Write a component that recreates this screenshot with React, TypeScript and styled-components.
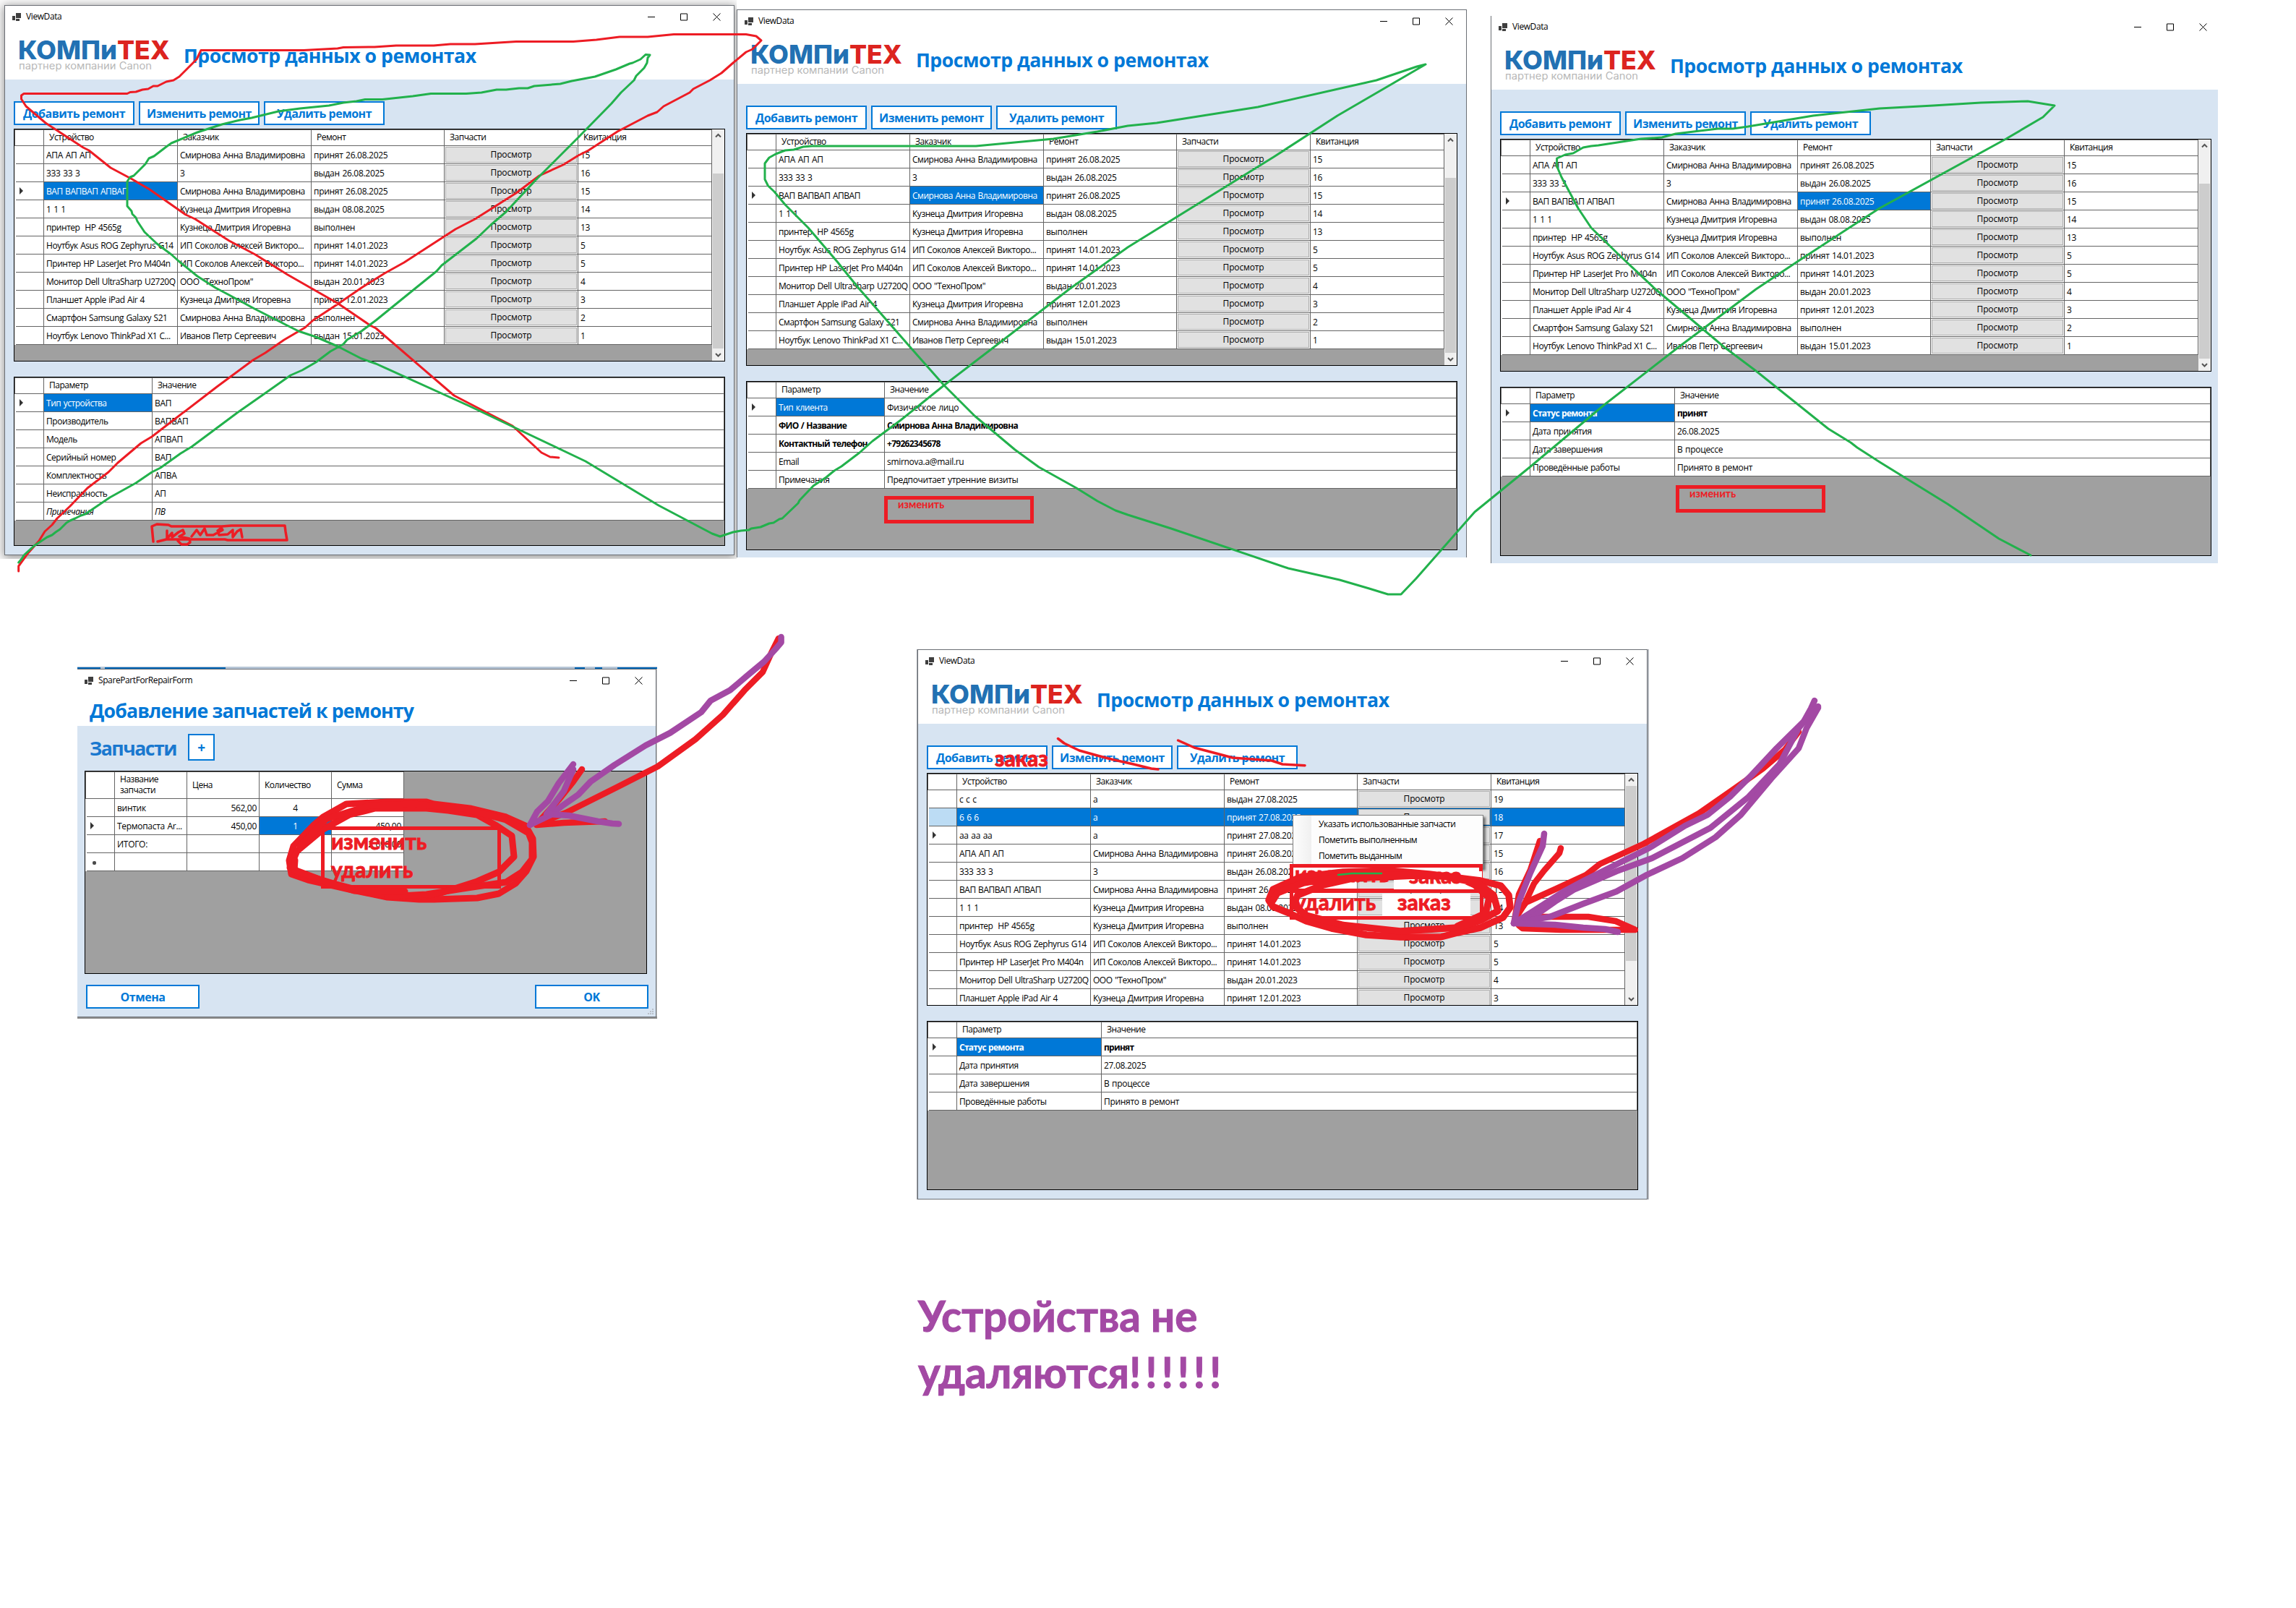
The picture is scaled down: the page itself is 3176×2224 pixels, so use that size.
import React from 'react';
import styled, { createGlobalStyle, css } from 'styled-components';

const ACCENT = '#0078d7';
const LINE = '#646464';
const RED = '#ed1c24';
const GREEN = '#22b14c';
const PURPLE = '#a349a4';
const UI = `'Open Sans', 'Noto Sans', sans-serif`;
const NOTE = `Lato, 'Open Sans', sans-serif`;

const Global = createGlobalStyle`
  * { box-sizing: border-box; }
  body { margin: 0; background: #fff; }
`;

const Canvas = styled.main`
  position: relative;
  width: 3176px;
  height: 2224px;
  overflow: hidden;
  background: #fff;
  font-family: ${UI};
  font-size: 12px;
  color: #000;
`;

/* ---------- window chrome ---------- */

const ShadowPlate = styled.div`
  position: absolute;
  left: 0;
  top: 0;
  width: 1019px;
  height: 773px;
  padding: 7px 0 0 6px;
  overflow: hidden;
  background: #fafafa;
`;

const Frame = styled.section<{
  $x?: number; $y?: number; $w: number; $h: number; $edges: string; $fringe?: boolean; $shadow?: boolean;
}>`
  position: ${(p) => (p.$x === undefined ? 'relative' : 'absolute')};
  left: ${(p) => p.$x ?? 0}px;
  top: ${(p) => p.$y ?? 0}px;
  width: ${(p) => p.$w}px;
  height: ${(p) => p.$h}px;
  overflow: hidden;
  background: #d7e4f2;
  border: 0 solid #6b6f75;
  border-width: ${(p) => p.$edges};
  ${(p) => p.$fringe && css`box-shadow: 2px 0 0 #b4b8be, -1px 0 0 #9a9ea4;`}
  ${(p) => p.$shadow && css`box-shadow: 0 2px 12px 1px rgba(0, 0, 0, 0.42);`}
`;

const Head = styled.header<{ $h: number }>`
  height: ${(p) => p.$h}px;
  background: #fff;
`;

const Caption = styled.div<{ $pad: number }>`
  display: flex;
  align-items: center;
  height: 31px;
  padding-left: ${(p) => p.$pad}px;
`;

const CaptionText = styled.span`
  margin-left: 7px;
  letter-spacing: -0.4px;
  line-height: 16px;
  padding-bottom: 2px;
`;

const CaptionButtons = styled.div`
  display: flex;
  gap: 35px;
  margin-left: auto;
`;

const BrandRow = styled.div`
  display: flex;
  align-items: flex-start;
  padding: 15px 0 0 17px;
`;

const WindowTitle = styled.h1`
  margin: 5px 0 0 14px;
  font-size: 26.67px;
  line-height: 36px;
  font-weight: 700;
  letter-spacing: -0.5px;
  color: ${ACCENT};
  white-space: nowrap;
`;

const Body = styled.div`
  display: flex;
  flex-direction: column;
  align-items: flex-start;
  padding: 30px 0 0 12px;
`;

const Toolbar = styled.div`
  display: flex;
  gap: 6px;
  margin-bottom: 5px;
`;

const ActionButton = styled.button<{ $w: number; $h?: number; $size?: number }>`
  width: ${(p) => p.$w}px;
  height: ${(p) => p.$h ?? 33}px;
  padding: 0;
  border: 2px solid ${ACCENT};
  background: #fff;
  color: ${ACCENT};
  font: 700 ${(p) => p.$size ?? 16}px/24px ${UI};
  letter-spacing: -0.5px;
  white-space: nowrap;
`;

/* ---------- data grid ---------- */

const GridBox = styled.div<{ $w: number; $h: number; $mt?: number }>`
  display: flex;
  flex: none;
  width: ${(p) => p.$w}px;
  height: ${(p) => p.$h}px;
  margin-top: ${(p) => p.$mt ?? 0}px;
  overflow: hidden;
  border: 1px solid #000;
  background: #a0a0a0;
`;

const Rows = styled.div<{ $fill?: boolean }>`
  flex: ${(p) => (p.$fill ? '1' : 'none')};
  min-width: 0;
  overflow: hidden;
`;

const Row = styled.div<{ $cols: string; $h: number; $head?: boolean }>`
  display: grid;
  grid-template-columns: ${(p) => p.$cols};
  height: ${(p) => p.$h}px;
  background: #fff;
  ${(p) => p.$head && css`box-shadow: inset 0 1px 0 ${LINE}, inset 1px 0 0 ${LINE};`}
`;

type Align = 'left' | 'center' | 'right';

const Cell = styled.div<{
  $sel?: boolean; $head?: boolean; $align?: Align; $bold?: boolean; $italic?: boolean; $loose?: boolean;
}>`
  display: flex;
  align-items: center;
  justify-content: ${(p) => (p.$align === 'right' ? 'flex-end' : p.$align === 'center' ? 'center' : 'flex-start')};
  min-width: 0;
  padding: ${(p) => (p.$head ? '0 4px 1px 7px' : '1px 3px 0 3px')};
  border-right: 1px solid ${LINE};
  border-bottom: 1px solid ${LINE};
  background: ${(p) => (p.$sel ? ACCENT : 'transparent')};
  color: ${(p) => (p.$sel ? '#fff' : '#000')};
  font-weight: ${(p) => (p.$bold ? 700 : 400)};
  font-style: ${(p) => (p.$italic ? 'italic' : 'normal')};
  letter-spacing: ${(p) => (p.$bold ? -0.72 : p.$loose ? -0.3 : -0.47)}px;
  word-spacing: 0.8px;
  line-height: 15px;
`;

const CellText = styled.span`
  white-space: pre;
`;

const HeadText = styled.span`
  white-space: pre-line;
`;

const RowMarker = styled.div<{ $lit?: boolean }>`
  display: flex;
  align-items: center;
  margin-left: 2px;
  padding-left: 5px;
  border-right: 1px solid ${LINE};
  border-bottom: 1px solid ${LINE};
  background: ${(p) => (p.$lit ? '#bcdcf4' : '#fff')};
`;

const Pointer = styled.i`
  border: solid transparent;
  border-width: 5px 0 5px 5.5px;
  border-left-color: #333;
`;

const NewDot = styled.i`
  width: 5px;
  height: 5px;
  margin: 3px 0 0 3px;
  border-radius: 2px;
  background: #4a4a4a;
`;

const ButtonCell = styled.div<{ $sel?: boolean }>`
  display: flex;
  padding: 1px;
  border-right: 1px solid ${LINE};
  border-bottom: 1px solid ${LINE};
  background: ${(p) => (p.$sel ? ACCENT : '#fff')};
`;

const ViewButton = styled.button`
  flex: 1;
  padding: 0 0 1px;
  border: 1px solid #adadad;
  background: #e1e1e1;
  color: #000;
  font: 12px/16px ${UI};
  letter-spacing: -0.15px;
`;

const ScrollTrack = styled.div`
  display: flex;
  flex-direction: column;
  width: 17px;
  background: #f0f0f0;
`;

const ScrollThumb = styled.div<{ $top: number }>`
  width: 15px;
  height: 242px;
  margin: ${(p) => p.$top}px 0 auto 1px;
  background: #cdcdcd;
`;

/* ---------- parts dialog ---------- */

const DialogPlate = styled.div`
  position: absolute;
  left: 107px;
  top: 922px;
  width: 802px;
  height: 487px;
  padding-top: 3px;
  background: linear-gradient(#b6c5d5 0 3px, #c9c9c9 3px 484px, #8e8e8e 484px);
`;

const PeekBar = styled.div<{ $x: number; $w: number }>`
  position: absolute;
  left: ${(p) => p.$x}px;
  top: 1px;
  width: ${(p) => p.$w}px;
  height: 2px;
  background: #0064b4;
`;

const DialogTitle = styled(WindowTitle)`
  margin: 8px 0 0 17px;
  letter-spacing: -0.85px;
`;

const DialogBody = styled.div`
  display: flex;
  flex-direction: column;
  padding: 11px 10px 0 10px;
`;

const PartsRow = styled.div`
  display: flex;
  align-items: flex-start;
  height: 51px;
  padding-left: 7px;
  gap: 17px;
`;

const PartsHeading = styled.h2`
  width: 119px;
  margin: 2px 0 0;
  font-size: 26.67px;
  line-height: 36px;
  font-weight: 700;
  letter-spacing: -1.5px;
  color: #1a78cf;
  white-space: nowrap;
`;

const DialogFooter = styled.div`
  display: flex;
  justify-content: space-between;
  padding: 15px 0 0 2px;
`;

const Grip = styled.svg`
  position: absolute;
  right: 2px;
  bottom: 2px;
`;

/* ---------- context menu ---------- */

const Menu = styled.ul`
  position: absolute;
  left: 1788px;
  top: 1127px;
  width: 264px;
  height: 74px;
  margin: 0;
  padding: 2px 2px 2px 1px;
  list-style: none;
  border: 1px solid #808080;
  background: linear-gradient(90deg, #fcfcfc 2px, #f0f0f0 25px, #fdfdfd 25px);
  box-shadow: 3px 3px 3px rgba(0, 0, 0, 0.5);
`;

const MenuItem = styled.li`
  height: 22px;
  padding-left: 34px;
  font-size: 12px;
  line-height: 20px;
  letter-spacing: -0.48px;
  white-space: nowrap;
`;

/* ---------- annotations ---------- */

const Note = styled.div<{
  $x: number; $y: number; $size: number; $color?: string; $lh?: number; $heavy?: boolean;
}>`
  position: absolute;
  left: ${(p) => p.$x}px;
  top: ${(p) => p.$y}px;
  font-family: ${NOTE};
  font-weight: 700;
  font-size: ${(p) => p.$size}px;
  line-height: ${(p) => p.$lh ?? p.$size * 1.2}px;
  color: ${(p) => p.$color ?? RED};
  white-space: pre;
  ${(p) => p.$heavy && css`-webkit-text-stroke: 1px ${p.$color ?? RED};`}
`;

const Spaced = styled.span`
  letter-spacing: 5.8px;
`;

const MarkBox = styled.div<{ $x: number; $y: number; $w: number; $h: number }>`
  position: absolute;
  left: ${(p) => p.$x}px;
  top: ${(p) => p.$y}px;
  width: ${(p) => p.$w}px;
  height: ${(p) => p.$h}px;
  border: 5px solid ${RED};
`;

const Patch = styled.div<{ $x: number; $y: number; $w: number; $h: number }>`
  position: absolute;
  left: ${(p) => p.$x}px;
  top: ${(p) => p.$y}px;
  width: ${(p) => p.$w}px;
  height: ${(p) => p.$h}px;
  background: #fff;
`;

const Ink = styled.svg`
  position: absolute;
  left: 0;
  top: 0;
  pointer-events: none;
`;

/* ---------- parts ---------- */

const AppGlyph = () => (
  <svg width="12" height="11" viewBox="0 0 12 11" fill="#3f3f3f">
    <path d="M0 4h4v6H0zM5 0h7v7H5zM5 8h5v3H5z" />
  </svg>
);

const WindowButtons = () => (
  <CaptionButtons>
    <svg width="10" height="11"><path d="M0 5.5H10" stroke="#000" /></svg>
    <svg width="10" height="11"><path d="M.5 1h9v9h-9z" fill="none" stroke="#000" /></svg>
    <svg width="11" height="11"><path d="M.5 .5L10.5 10.5M10.5 .5L.5 10.5" stroke="#000" fill="none" /></svg>
  </CaptionButtons>
);

const LogoArt = styled.svg`
  flex: none;
  overflow: visible;
  font-family: Inter, 'Open Sans', sans-serif;
`;

const Logo = () => (
  <LogoArt width="216" height="47">
    <text x="1" y="28" fontSize="36" fontWeight="800" fill="#2271b3" textLength="137" lengthAdjust="spacingAndGlyphs">КОМПи</text>
    <text x="138" y="28" fontSize="36" fontWeight="800" fill="#dc241f" textLength="73" lengthAdjust="spacingAndGlyphs">ТЕХ</text>
    <text x="2" y="42" fontSize="14" fill="#b8b8b8" textLength="184" lengthAdjust="spacingAndGlyphs">партнер компании Canon</text>
  </LogoArt>
);

const Chevron = ({ down }: { down?: boolean }) => (
  <svg width="17" height="17" fill="none" stroke="#555" strokeWidth="2">
    <path d={down ? 'M5 7L8.5 10.5L12 7' : 'M5 10.5L8.5 7L12 10.5'} />
  </svg>
);

const Scrollbar = ({ top }: { top: number }) => (
  <ScrollTrack>
    <Chevron />
    <ScrollThumb $top={top} />
    <Chevron down />
  </ScrollTrack>
);

type Repair = [string, string, string, string];
const V = 'Смирнова Анна Владимировна';
const K = 'Кузнеца Дмитрия Игоревна';
const S = 'ИП Соколов Алексей Викторо...';

const repairs: Repair[] = [
  ['АПА АП АП', V, 'принят 26.08.2025', '15'],
  ['333 33 3', '3', 'выдан 26.08.2025', '16'],
  ['ВАП ВАПВАП АПВАП', V, 'принят 26.08.2025', '15'],
  ['1 1 1', K, 'выдан 08.08.2025', '14'],
  ['принтер  HP 4565g', K, 'выполнен', '13'],
  ['Ноутбук Asus ROG Zephyrus G14', S, 'принят 14.01.2023', '5'],
  ['Принтер HP LaserJet Pro M404n', S, 'принят 14.01.2023', '5'],
  ['Монитор Dell UltraSharp U2720Q', 'ООО "ТехноПром"', 'выдан 20.01.2023', '4'],
  ['Планшет Apple iPad Air 4', K, 'принят 12.01.2023', '3'],
  ['Смартфон Samsung Galaxy S21', V, 'выполнен', '2'],
  ['Ноутбук Lenovo ThinkPad X1 C...', 'Иванов Петр Сергеевич', 'выдан 15.01.2023', '1'],
];

const laterRepairs: Repair[] = [
  ['с с с', 'а', 'выдан 27.08.2025', '19'],
  ['6 6 6', 'а', 'принят 27.08.2025', '18'],
  ['аа аа аа', 'а', 'принят 27.08.2025', '17'],
  ...repairs.slice(0, 9),
];

const MAIN_COLS = '41px 185px 185px 184px 185px 185px';

interface RepairGridProps { rows: Repair[]; current: number; cell?: number; selectedRow?: number; thumb: number }

const RepairGrid = ({ rows, current, cell, selectedRow, thumb }: RepairGridProps) => (
  <GridBox $w={984} $h={322}>
    <Rows>
      <Row $cols={MAIN_COLS} $h={23} $head>
        {['', 'Устройство', 'Заказчик', 'Ремонт', 'Запчасти', 'Квитанция'].map((t, i) => (
          <Cell key={i} $head><HeadText>{t}</HeadText></Cell>
        ))}
      </Row>
      {rows.map((r, i) => {
        const lit = selectedRow === i;
        const on = (c: number) => lit || (i === current && cell === c);
        return (
          <Row key={i} $cols={MAIN_COLS} $h={25}>
            <RowMarker $lit={lit}>{i === current && <Pointer />}</RowMarker>
            {[0, 1, 2].map((c) => (
              <Cell key={c} $sel={on(c)} $loose={c === 2 || r[c].length < 10}><CellText>{r[c]}</CellText></Cell>
            ))}
            <ButtonCell $sel={lit}><ViewButton>Просмотр</ViewButton></ButtonCell>
            <Cell $sel={lit}><CellText>{r[3]}</CellText></Cell>
          </Row>
        );
      })}
    </Rows>
    <Scrollbar top={thumb} />
  </GridBox>
);

interface Param { name: string; value: string; bold?: boolean; italic?: boolean }

const ParamGrid = ({ rows, nameWidth }: { rows: Param[]; nameWidth: number }) => {
  const cols = `41px ${nameWidth}px 1fr`;
  return (
    <GridBox $w={984} $h={234} $mt={21}>
      <Rows $fill>
        <Row $cols={cols} $h={23} $head>
          <Cell $head />
          <Cell $head><HeadText>Параметр</HeadText></Cell>
          <Cell $head><HeadText>Значение</HeadText></Cell>
        </Row>
        {rows.map((r, i) => (
          <Row key={r.name} $cols={cols} $h={25}>
            <RowMarker>{i === 0 && <Pointer />}</RowMarker>
            <Cell $sel={i === 0} $bold={r.bold} $italic={r.italic}><CellText>{r.name}</CellText></Cell>
            <Cell $bold={r.bold} $italic={r.italic} $loose><CellText>{r.value}</CellText></Cell>
          </Row>
        ))}
      </Rows>
    </GridBox>
  );
};

interface ViewWindowProps extends RepairGridProps {
  x?: number; y?: number; w: number; h: number; edges: string; fringe?: boolean; shadow?: boolean;
  params: Param[]; nameWidth: number; closeGap: number;
}

const HeaderCaption = styled(Caption)<{ $right: number }>`
  padding-right: ${(p) => p.$right}px;
`;

const ViewWindow = (p: ViewWindowProps) => (
  <Frame $x={p.x} $y={p.y} $w={p.w} $h={p.h} $edges={p.edges} $fringe={p.fringe} $shadow={p.shadow}>
    <Head $h={102}>
      <HeaderCaption $pad={10} $right={p.closeGap}>
        <AppGlyph />
        <CaptionText>ViewData</CaptionText>
        <WindowButtons />
      </HeaderCaption>
      <BrandRow>
        <Logo />
        <WindowTitle>Просмотр данных о ремонтах</WindowTitle>
      </BrandRow>
    </Head>
    <Body>
      <Toolbar>
        <ActionButton $w={167}>Добавить ремонт</ActionButton>
        <ActionButton $w={167}>Изменить ремонт</ActionButton>
        <ActionButton $w={167}>Удалить ремонт</ActionButton>
      </Toolbar>
      <RepairGrid rows={p.rows} current={p.current} cell={p.cell} selectedRow={p.selectedRow} thumb={p.thumb} />
      <ParamGrid rows={p.params} nameWidth={p.nameWidth} />
    </Body>
  </Frame>
);

const deviceParams: Param[] = [
  { name: 'Тип устройства', value: 'ВАП' },
  { name: 'Производитель', value: 'ВАПВАП' },
  { name: 'Модель', value: 'АПВАП' },
  { name: 'Серийный номер', value: 'ВАП' },
  { name: 'Комплектность', value: 'АПВА' },
  { name: 'Неисправность', value: 'АП' },
  { name: 'Примечания', value: 'ПВ', italic: true },
];

const clientParams: Param[] = [
  { name: 'Тип клиента', value: 'Физическое лицо' },
  { name: 'ФИО / Название', value: V, bold: true },
  { name: 'Контактный телефон', value: '+79262345678', bold: true },
  { name: 'Email', value: 'smirnova.a@mail.ru' },
  { name: 'Примечания', value: 'Предпочитает утренние визиты' },
];

const statusParams = (date: string): Param[] => [
  { name: 'Статус ремонта', value: 'принят', bold: true },
  { name: 'Дата принятия', value: date },
  { name: 'Дата завершения', value: 'В процессе' },
  { name: 'Проведённые работы', value: 'Принято в ремонт' },
];

const PARTS_COLS = '41px 100px 100px 100px 100px';
const parts = [
  ['винтик', '562,00', '4', ''],
  ['Термопаста Ar...', '450,00', '1', '450,00'],
  ['ИТОГО:', '', '', '2 698,00'],
  ['', '', '', ''],
];
const aligns: Align[] = ['left', 'right', 'center', 'right'];

const PartsDialog = () => (
  <DialogPlate>
    <PeekBar $x={0} $w={32} />
    <PeekBar $x={38} $w={167} />
    <PeekBar $x={688} $w={14} />
    <PeekBar $x={716} $w={10} />
    <PeekBar $x={747} $w={55} />
    <Frame $w={801} $h={482} $edges="1px 1px 1px 0">
      <Head $h={78}>
        <HeaderCaption $pad={10} $right={18}>
          <AppGlyph />
          <CaptionText>SparePartForRepairForm</CaptionText>
          <WindowButtons />
        </HeaderCaption>
        <DialogTitle>Добавление запчастей к ремонту</DialogTitle>
      </Head>
      <DialogBody>
        <PartsRow>
          <PartsHeading>Запчасти</PartsHeading>
          <ActionButton $w={37} $h={37} $size={19}>+</ActionButton>
        </PartsRow>
        <GridBox $w={778} $h={281}>
          <Rows>
            <Row $cols={PARTS_COLS} $h={38} $head>
              {['', 'Название\nзапчасти', 'Цена', 'Количество', 'Сумма'].map((t, i) => (
                <Cell key={i} $head><HeadText>{t}</HeadText></Cell>
              ))}
            </Row>
            {parts.map((r, i) => (
              <Row key={i} $cols={PARTS_COLS} $h={25}>
                <RowMarker>{i === 1 ? <Pointer /> : i === 3 ? <NewDot /> : null}</RowMarker>
                {r.map((t, c) => (
                  <Cell key={c} $align={aligns[c]} $sel={i === 1 && c === 2} $loose><CellText>{t}</CellText></Cell>
                ))}
              </Row>
            ))}
          </Rows>
        </GridBox>
        <DialogFooter>
          <ActionButton $w={157}>Отмена</ActionButton>
          <ActionButton $w={157}>OK</ActionButton>
        </DialogFooter>
      </DialogBody>
      <Grip width="9" height="9" fill="#b8bfc8">
        <path d="M6 0h2v2H6zM3 3h2v2H3zM6 3h2v2H6zM0 6h2v2H0zM3 6h2v2H3zM6 6h2v2H6z" />
      </Grip>
    </Frame>
  </DialogPlate>
);

/* ---------- freehand strokes ---------- */

interface Stroke { c: string; w: number; p: string }

const thinStrokes: Stroke[] = [
  { c: RED, w: 3, p: '25.7,790 25.7,783 38,766 54,748 62,735 72,726 79,717 97,700 121,675 150,653 163,640 195,613 210,604 300,535 350,498 367,488 393,470 422,453 433,443 468,420 500,398 532,378 559,363 630,317 657,303 714,267 746,243 779,228 800,215 814,208 854,182 896,160 909,155 918,147 954,128 959,123 982,111 998,101 1014,87 1032,72 1041,68 1050,59 1053,56 1046,50 1032,47.5 932,47.5 896,51 857,51 825,55 793,57.5 714,57.5 657,61 623,61 600,63 548,63 518,65 475,65.5 467,67 420,69.5 278,69.5 272,82 260,94 248,106 240,111 230,113 218,119 212,119 205,123 197,124 188,127 180,127.5 176,129.5 33,129.5 29.5,132 29.5,137 36,147 43,153 63,170 115,204 123,208 153,232 183,248 207,262 257,297 270,303 317,333 353,352 398,380 468,420 512,450 520,454 628,547 678,573 709,589 749,626 761,632 773,633' },
  { c: GREEN, w: 3, p: '25.7,778 30,773 33,768 47,755 65,743 72,740 77,736 83,732 92,723 97,720 104,717 112,713 118,711 152,688 188,668 210,653 222,647 250,627 265,618 328,571 368,543 402,519 418,512 437,501 457,486 475,476 480,470 500,458 520,443 573,400 604,375 611,367 659,330 679,311 700,293 741,249 800,190 846,143 859,128 877,111 880,105 891,94 895,87 896,80 899,76 893,75.5 886,82 875,87 871,88 852,96 823,106 807,109 791,112 775,116 739,119 730,122 718,122 700,124 687,124 666,128 645,129.5 596,129.5 571,133 529,137.5 505,137.5 493,140 475,142 455,146 415,150 385,154 348,163 332,166 307,172 273,183 237,198 230,203 213,216 206,219 201,227 185,243 180,245 176,251 176,285 182,292 183,296 188,301 190,306 200,321 217,337 237,352 247,361 273,382 298,398 317,408 352,427 397,450 413,458 437,466 467,479 500,496 520,503 648,561 810,638 911,699 985,738 996,742 1014,736 1025,734 1036,733 1039,731 1052,729 1064,724 1070,723 1078,718 1082,717 1104,696 1106,692 1125,672 1143,660 1154,651 1164,645 1189,626 1207,610 1246,581 1307,532 1375,480 1479,400 1560,342 1762,217 1850,160 1972,89 1960,92 1904,111 1740,148 1600,170 1560,174 1518,182 1457,192 1350,202 1123,202 1111,203 1098,207 1086,208 1073,213 1064,218 1058,226 1058,248 1062.5,257 1071,265 1086,283 1118,315 1159,363 1175,383 1189,400 1259,480 1305,532 1348,575 1404,622 1437,646 1489,675 1518,693 1543,706 1560,712 1620,731 1782,786 1853,802 1894,814 1920,822 1938,822 1959,800 2040,708 2115,647 2219,560 2322,480 2429,400 2486,362 2558,315 2600,288 2775,192 2826,162 2842,146 2805,140 2740,142 2674,146 2600,150 2508,160 2418,175 2397,178 2376,178 2318,185 2299,190 2270,192 2211,201 2201,202 2190,204 2176,212 2165,214 2153.6,219 2153.6,230 2160,245 2183,288 2201,315 2240,353 2290,400 2385,480 2429,513 2529,593 2560,612 2569,619 2600,639 2694,697 2765,745 2809,768' },
  { c: RED, w: 3.5, p: '212,749 210,728 217,725 233,726 237,728 307,728 320,727 394,727 395,735 397,747 315,747 311,746 230,746 218,749' },
  { c: RED, w: 3.5, p: '231,734 231,745 238,737 238,743 247,736 253,733 255,738 248,742 262,745 263,750 259,753 251,753 246,748' },
  { c: RED, w: 3.5, p: '265,742 272,733 277,740 283,731 286,740 295,740 308,733 306,730 301,734 303,740 315,739 322,733 322,743 328,735 333,732 335,743' },
  { c: RED, w: 3.5, p: '1463.5,1021.5 1472,1028 1493,1038 1518,1045 1539,1050.5 1568,1057 1592.5,1063 1602,1064' },
  { c: RED, w: 3.5, p: '1629.6,1024 1652,1034 1678.6,1041 1705,1048 1759,1052 1774,1057 1805,1058.7' },
];

const thickStrokes: Stroke[] = [
  { c: RED, w: 9, p: '479,1112 536,1109 590,1109 600,1112 650,1118 700,1130 727,1142 737,1160 738,1185 728,1205 713,1222 690,1236 660,1242 600,1244 580,1244 536,1241 483,1230 426,1217 403,1209 400,1190 406,1170 433,1142 447,1130 479,1112' },
  { c: RED, w: 9, p: '401,1200 411,1177 447,1147 483,1127 519,1118 590,1118 620,1121 660,1127 687,1142 708,1156 711,1185 690,1206 660,1219 610,1235 580,1240 519,1237 465,1223 411,1207 401,1190' },
  { c: RED, w: 9, p: '415,1170 451,1133 511,1114 572,1112 640,1118 700,1134 731,1152 736,1165 736,1188 722,1206 700,1220 640,1229 590,1237 536,1240' },
  { c: RED, w: 9, p: '408,1190 407,1203 455,1221 490,1232 560,1233' },
  { c: RED, w: 8.5, p: '742,1140 783,1124 807,1112 853,1089 910,1060 962,1022.5 1000,988.6 1030,954.6 1055,929.6 1067,903 1077,883' },
  { c: RED, w: 8.5, p: '742,1140 773,1106 793,1081 805,1064' },
  { c: RED, w: 8.5, p: '742,1141 780,1138 837,1136' },
  { c: PURPLE, w: 8.5, p: '733,1141 760,1128 777,1115 800,1099 817,1081 850,1058 893,1031 927,1013.6 970,985 983,969 1010,954.6 1033,935 1057,915 1073,897.5 1080.6,888.6 1080.6,881' },
  { c: PURPLE, w: 8.5, p: '733,1141 743,1122.5 758,1108 773,1083 793,1057' },
  { c: PURPLE, w: 8.5, p: '756,1126 780,1094 793,1064' },
  { c: PURPLE, w: 8.5, p: '760,1126 787,1128 827,1136 847,1139 856,1139.6' },
  { c: RED, w: 9.5, p: '1755,1245 1761,1230 1799,1213 1858,1206 1921,1204 1977,1209 2048,1218 2076,1225 2087,1238 2089,1255 2079,1269 2048,1283 2016,1290 1993,1296 1937,1296 1890,1293 1842,1284 1807,1274 1781,1262 1761,1254 1755,1245' },
  { c: RED, w: 9.5, p: '1761,1245 1767,1235 1803,1221 1858,1212 1921,1210 1997,1212 2044,1221 2066,1238 2072,1260 2048,1273 2016,1283 1937,1288 1858,1279.5 1807,1266 1789,1252 1795,1238 1830,1224 1870,1215 1977,1210 2016,1213 2040,1224 2060,1242 2055,1263 2016,1281' },
  { c: RED, w: 8.5, p: '2100,1262 2111,1248 2151,1230 2194,1210 2213,1195 2274,1167 2350,1125 2396,1093 2438.5,1063 2469,1037 2488,1012' },
  { c: RED, w: 8.5, p: '2130,1163 2117,1203 2101,1237 2095,1273' },
  { c: RED, w: 8.5, p: '2159,1173 2157,1180 2136,1204 2122,1222 2109,1250 2099,1266' },
  { c: RED, w: 8.5, p: '2101,1280 2106,1284 2159,1286 2262,1286 2235,1274 2197,1268 2132,1268' },
  { c: PURPLE, w: 8.5, p: '2094,1277 2121,1260 2163,1233 2193,1217 2281,1173 2331,1142 2362,1127 2393,1102 2423,1072 2457.5,1035 2495,998 2505,980 2510,969' },
  { c: PURPLE, w: 8.5, p: '2094,1277 2121,1268 2151,1247 2178,1230 2236,1205 2285,1187 2366,1145 2419,1102 2461.5,1057 2488,1007 2505,986 2515,977' },
  { c: PURPLE, w: 8.5, p: '2096,1276 2144,1268 2190,1250 2236,1233 2278,1210 2327,1187 2373,1158 2408,1127 2450,1077 2488,1035 2499,1007 2515,979' },
  { c: PURPLE, w: 8.5, p: '2094,1277 2101,1247 2117,1207 2134,1170 2136,1153' },
  { c: PURPLE, w: 8.5, p: '2094,1277 2151,1279 2190,1283 2220,1285 2238,1289' },
];

const Strokes = ({ list }: { list: Stroke[] }) => (
  <Ink width="3176" height="2224" fill="none" strokeLinecap="round" strokeLinejoin="round">
    {list.map((s, i) => <polyline key={i} points={s.p} stroke={s.c} strokeWidth={s.w} />)}
  </Ink>
);

export default function App() {
  return (
    <Canvas>
      <Global />

      <ShadowPlate>
        <ViewWindow w={1010} h={761} edges="1px" shadow closeGap={18}
          rows={repairs} current={2} cell={0} thumb={44} params={deviceParams} nameWidth={150} />
      </ShadowPlate>
      <ViewWindow x={1019} y={13} w={1010} h={758} edges="1px 1px 0 1px" closeGap={18}
        rows={repairs} current={2} cell={1} thumb={44} params={clientParams} nameWidth={150} />
      <ViewWindow x={2062} y={22} w={1006} h={757} edges="0 0 0 1px" closeGap={15}
        rows={repairs} current={2} cell={2} thumb={44} params={statusParams('26.08.2025')} nameWidth={200} />
      <ViewWindow x={1269} y={898} w={1010} h={761} edges="1px" fringe closeGap={18}
        rows={laterRepairs} current={2} selectedRow={1} thumb={0} params={statusParams('27.08.2025')} nameWidth={200} />

      <PartsDialog />

      <Menu>
        <MenuItem>Указать использованные запчасти</MenuItem>
        <MenuItem>Пометить выполненным</MenuItem>
        <MenuItem>Пометить выданным</MenuItem>
      </Menu>

      <Patch $x={1786} $y={1197} $w={264} $h={17} />
      <MarkBox $x={1784} $y={1195} $w={267} $h={39} />
      <Note $x={1791} $y={1191} $size={29.5} $heavy>изменить</Note>
      <Patch $x={1928} $y={1205} $w={122} $h={26} />
      <Note $x={1949} $y={1193} $size={29.5} $heavy>заказ</Note>
      <MarkBox $x={1784} $y={1230} $w={268} $h={42} />
      <Note $x={1791} $y={1230} $size={29.5} $heavy>удалить</Note>
      <Patch $x={1912} $y={1236} $w={122} $h={31} />
      <Note $x={1933} $y={1229} $size={30} $heavy>заказ</Note>
      <Note $x={1376} $y={1030} $size={30} $heavy>заказ</Note>

      <MarkBox $x={1223} $y={686} $w={207} $h={38} />
      <Note $x={1242} $y={689} $size={14.5}>изменить</Note>
      <MarkBox $x={2318} $y={671} $w={207} $h={38} />
      <Note $x={2337} $y={674} $size={14.5}>изменить</Note>

      <MarkBox $x={444} $y={1143} $w={249} $h={86} />
      <Note $x={458} $y={1144} $size={29.8} $lh={39} $heavy>{'изменить\nудалить'}</Note>

      <Note $x={1270} $y={1780} $size={58.4} $lh={78} $color={PURPLE} $heavy>
        {'Устройства не\nудаляются'}
        <Spaced>!!!!!!</Spaced>
      </Note>

      <Strokes list={thinStrokes} />
      <Strokes list={thickStrokes} />
      <Strokes list={[{ c: GREEN, w: 2.5, p: '1851,1210 1870,1208 1911,1208' }]} />
    </Canvas>
  );
}
